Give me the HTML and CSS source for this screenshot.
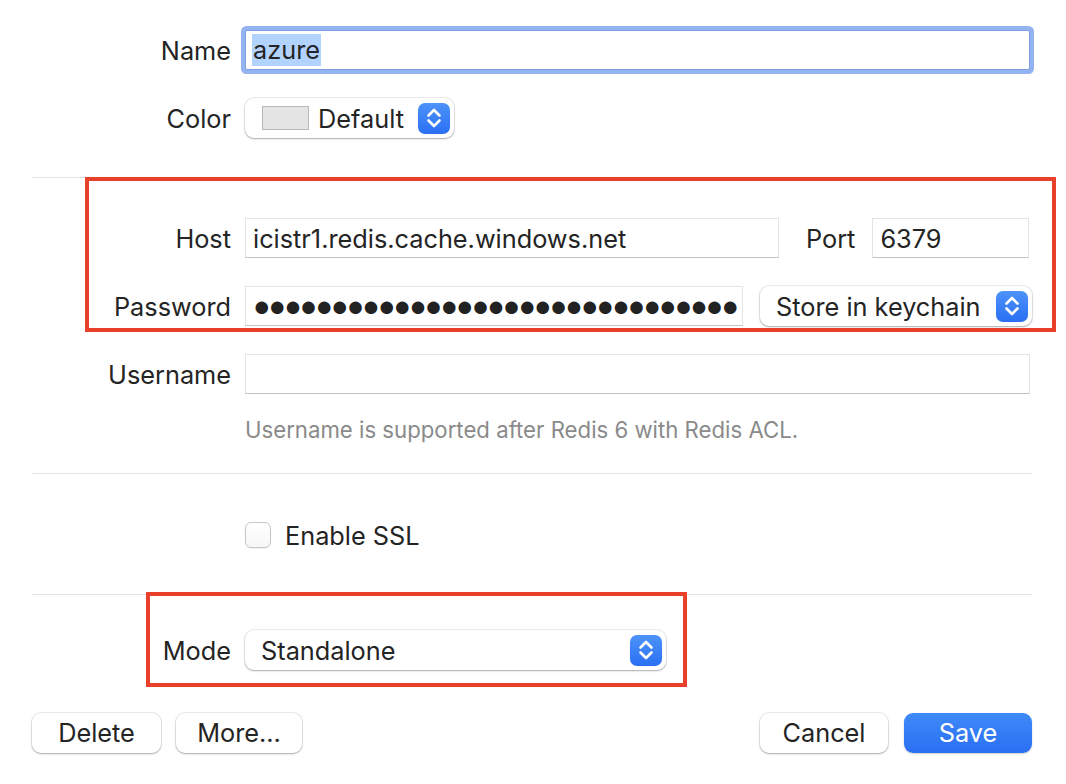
FILE: index.html
```html
<!DOCTYPE html>
<html>
<head>
<meta charset="utf-8">
<link rel="stylesheet" href="styles.css">
</head>
<body>
<div class="sheet">
  <div class="row r-name">
    <div class="lbl">Name</div>
    <div class="field focus"><span class="sel">azure</span></div>
  </div>
  <div class="row r-color">
    <div class="lbl">Color</div>
    <div class="popup color-popup">
      <span class="swatch"></span>
      <span class="ptext">Default</span>
      <span class="stepper"><svg viewBox="0 0 32 30" width="32" height="30"><path d="M10.5 12.5 L16 7 L21.5 12.5 M10.5 17.5 L16 23 L21.5 17.5" fill="none" stroke="#fff" stroke-width="2.6" stroke-linecap="round" stroke-linejoin="round"/></svg></span>
    </div>
  </div>
  <div class="sep s1"></div>
  <div class="row r-host">
    <div class="lbl">Host</div>
    <div class="field host">icistr1.redis.cache.windows.net</div>
    <div class="lbl2">Port</div>
    <div class="field port">6379</div>
  </div>
  <div class="row r-pass">
    <div class="lbl">Password</div>
    <div class="field pass"><span class="dots">●●●●●●●●●●●●●●●●●●●●●●●●●●●●●●●</span></div>
    <div class="popup store-popup">
      <span class="ptext">Store in keychain</span>
      <span class="stepper"><svg viewBox="0 0 32 30" width="32" height="30"><path d="M10.5 12.5 L16 7 L21.5 12.5 M10.5 17.5 L16 23 L21.5 17.5" fill="none" stroke="#fff" stroke-width="2.6" stroke-linecap="round" stroke-linejoin="round"/></svg></span>
    </div>
  </div>
  <div class="row r-user">
    <div class="lbl">Username</div>
    <div class="field user"></div>
  </div>
  <div class="help">Username is supported after Redis 6 with Redis ACL.</div>
  <div class="sep s2"></div>
  <div class="row r-ssl">
    <div class="lbl"></div>
    <span class="check"></span>
    <span class="check-text">Enable SSL</span>
  </div>
  <div class="sep s3"></div>
  <div class="row r-mode">
    <div class="lbl">Mode</div>
    <div class="popup mode-popup">
      <span class="ptext">Standalone</span>
      <span class="stepper"><svg viewBox="0 0 32 30" width="32" height="30"><path d="M10.5 12.5 L16 7 L21.5 12.5 M10.5 17.5 L16 23 L21.5 17.5" fill="none" stroke="#fff" stroke-width="2.6" stroke-linecap="round" stroke-linejoin="round"/></svg></span>
    </div>
  </div>
  <div class="buttons">
    <div class="btn b-delete">Delete</div>
    <div class="btn b-more">More...</div>
    <div class="spacer"></div>
    <div class="btn b-cancel">Cancel</div>
    <div class="btn primary b-save">Save</div>
  </div>
</div>
<div class="mark mark1"></div>
<div class="mark mark2"></div>
</body>
</html>
```
FILE: styles.css
```css
html, body {
  margin: 0;
  padding: 0;
  background: #fff;
}
body {
  width: 1066px;
  height: 784px;
  position: relative;
  overflow: hidden;
  font-family: "Inter", "Noto Sans", sans-serif;
  font-size: 25.3px;
  color: #242424;
}
.sheet {
  display: flex;
  flex-direction: column;
  padding: 30px 34px 0 32px;
}
.row {
  display: flex;
  align-items: center;
  height: 40px;
}
.lbl {
  width: 199px;
  margin-right: 14px;
  text-align: right;
  flex: none;
}
.field {
  box-sizing: border-box;
  height: 40px;
  background: #fff;
  border: 1px solid #e4e4e4;
  border-bottom-color: #c4c4c4;
  padding: 0 7px;
  display: flex;
  align-items: center;
  white-space: nowrap;
  overflow: hidden;
}
.field.focus {
  width: 785px;
  border: 1px solid #7d9fe6;
  box-shadow: 0 0 0 4px #93b3f1;
  border-radius: 2px;
  padding-left: 6px;
}
.sel {
  background: #b3d3ff;
  padding: 1px 1px;
  line-height: 30px;
}
.popup {
  box-sizing: border-box;
  height: 40px;
  background: #fff;
  border-radius: 9px;
  box-shadow: 0 0 0 1px rgba(0,0,0,0.07), 0 1px 2px rgba(0,0,0,0.28);
  display: flex;
  align-items: center;
  padding: 0 4px 0 16px;
}
.ptext {
  flex: 1;
  white-space: nowrap;
}
.stepper {
  width: 32px;
  height: 31px;
  border-radius: 7px;
  background: linear-gradient(#4d93f8, #2a6ff3);
  display: flex;
  align-items: center;
  justify-content: center;
  flex: none;
}
.stepper svg { display: block; }
.r-color { margin-top: 28px; }
.color-popup { width: 209px; padding-left: 17px; }
.swatch {
  width: 45px;
  height: 22px;
  background: #e4e4e4;
  border: 1px solid #b8b8b8;
  margin-right: 9px;
  flex: none;
}
.sep {
  height: 1px;
  background: #e2e2e2;
}
.s1 { margin-top: 39px; }
.r-host { margin-top: 40px; }
.host { width: 534px; }
.lbl2 { margin-left: 27px; margin-right: 17px; }
.port { width: 157px; }
.r-pass { margin-top: 28px; }
.pass { width: 498px; margin-right: 17px; }
.dots {
  font-family: "Liberation Sans", sans-serif;
  font-size: 29px;
  letter-spacing: -1.9px;
  color: #222;
}
.store-popup { width: 272px; }
.r-user { margin-top: 28px; }
.user { width: 785px; }
.help {
  margin-top: 24px;
  margin-left: 213px;
  height: 24px;
  line-height: 24px;
  font-size: 22.2px;
  color: #8a8a8a;
}
.s2 { margin-top: 31px; }
.r-ssl { margin-top: 41px; }
.check {
  box-sizing: border-box;
  width: 26px;
  height: 26px;
  border-radius: 6px;
  border: 1px solid #c6c6c6;
  background: linear-gradient(#fff, #f7f7f7);
  box-shadow: 0 1px 1px rgba(0,0,0,0.05);
  margin-right: 14px;
  flex: none;
}
.s3 { margin-top: 39px; }
.r-mode { margin-top: 35px; }
.mode-popup { width: 421px; }
.buttons {
  display: flex;
  align-items: center;
  margin-top: 43px;
  height: 40px;
}
.btn {
  box-sizing: border-box;
  height: 40px;
  width: 129px;
  border-radius: 9px;
  background: #fff;
  box-shadow: 0 0 0 1px rgba(0,0,0,0.07), 0 1px 2px rgba(0,0,0,0.28);
  display: flex;
  align-items: center;
  justify-content: center;
  padding-bottom: 2px;
}
.b-more { width: 126px; margin-left: 15px; }
.spacer { flex: 1; }
.b-cancel { width: 128px; }
.b-save { width: 128px; margin-left: 16px; }
.btn.primary {
  background: linear-gradient(#3f8af8, #2a6ff3);
  color: #fff;
  box-shadow: 0 1px 2px rgba(0,0,0,0.2);
}
.mark {
  position: absolute;
  box-sizing: border-box;
  border: 4px solid #e8402a;
}
.mark1 { left: 85px; top: 177px; width: 971px; height: 155px; }
.mark2 { left: 146px; top: 592px; width: 541px; height: 95px; }
```
